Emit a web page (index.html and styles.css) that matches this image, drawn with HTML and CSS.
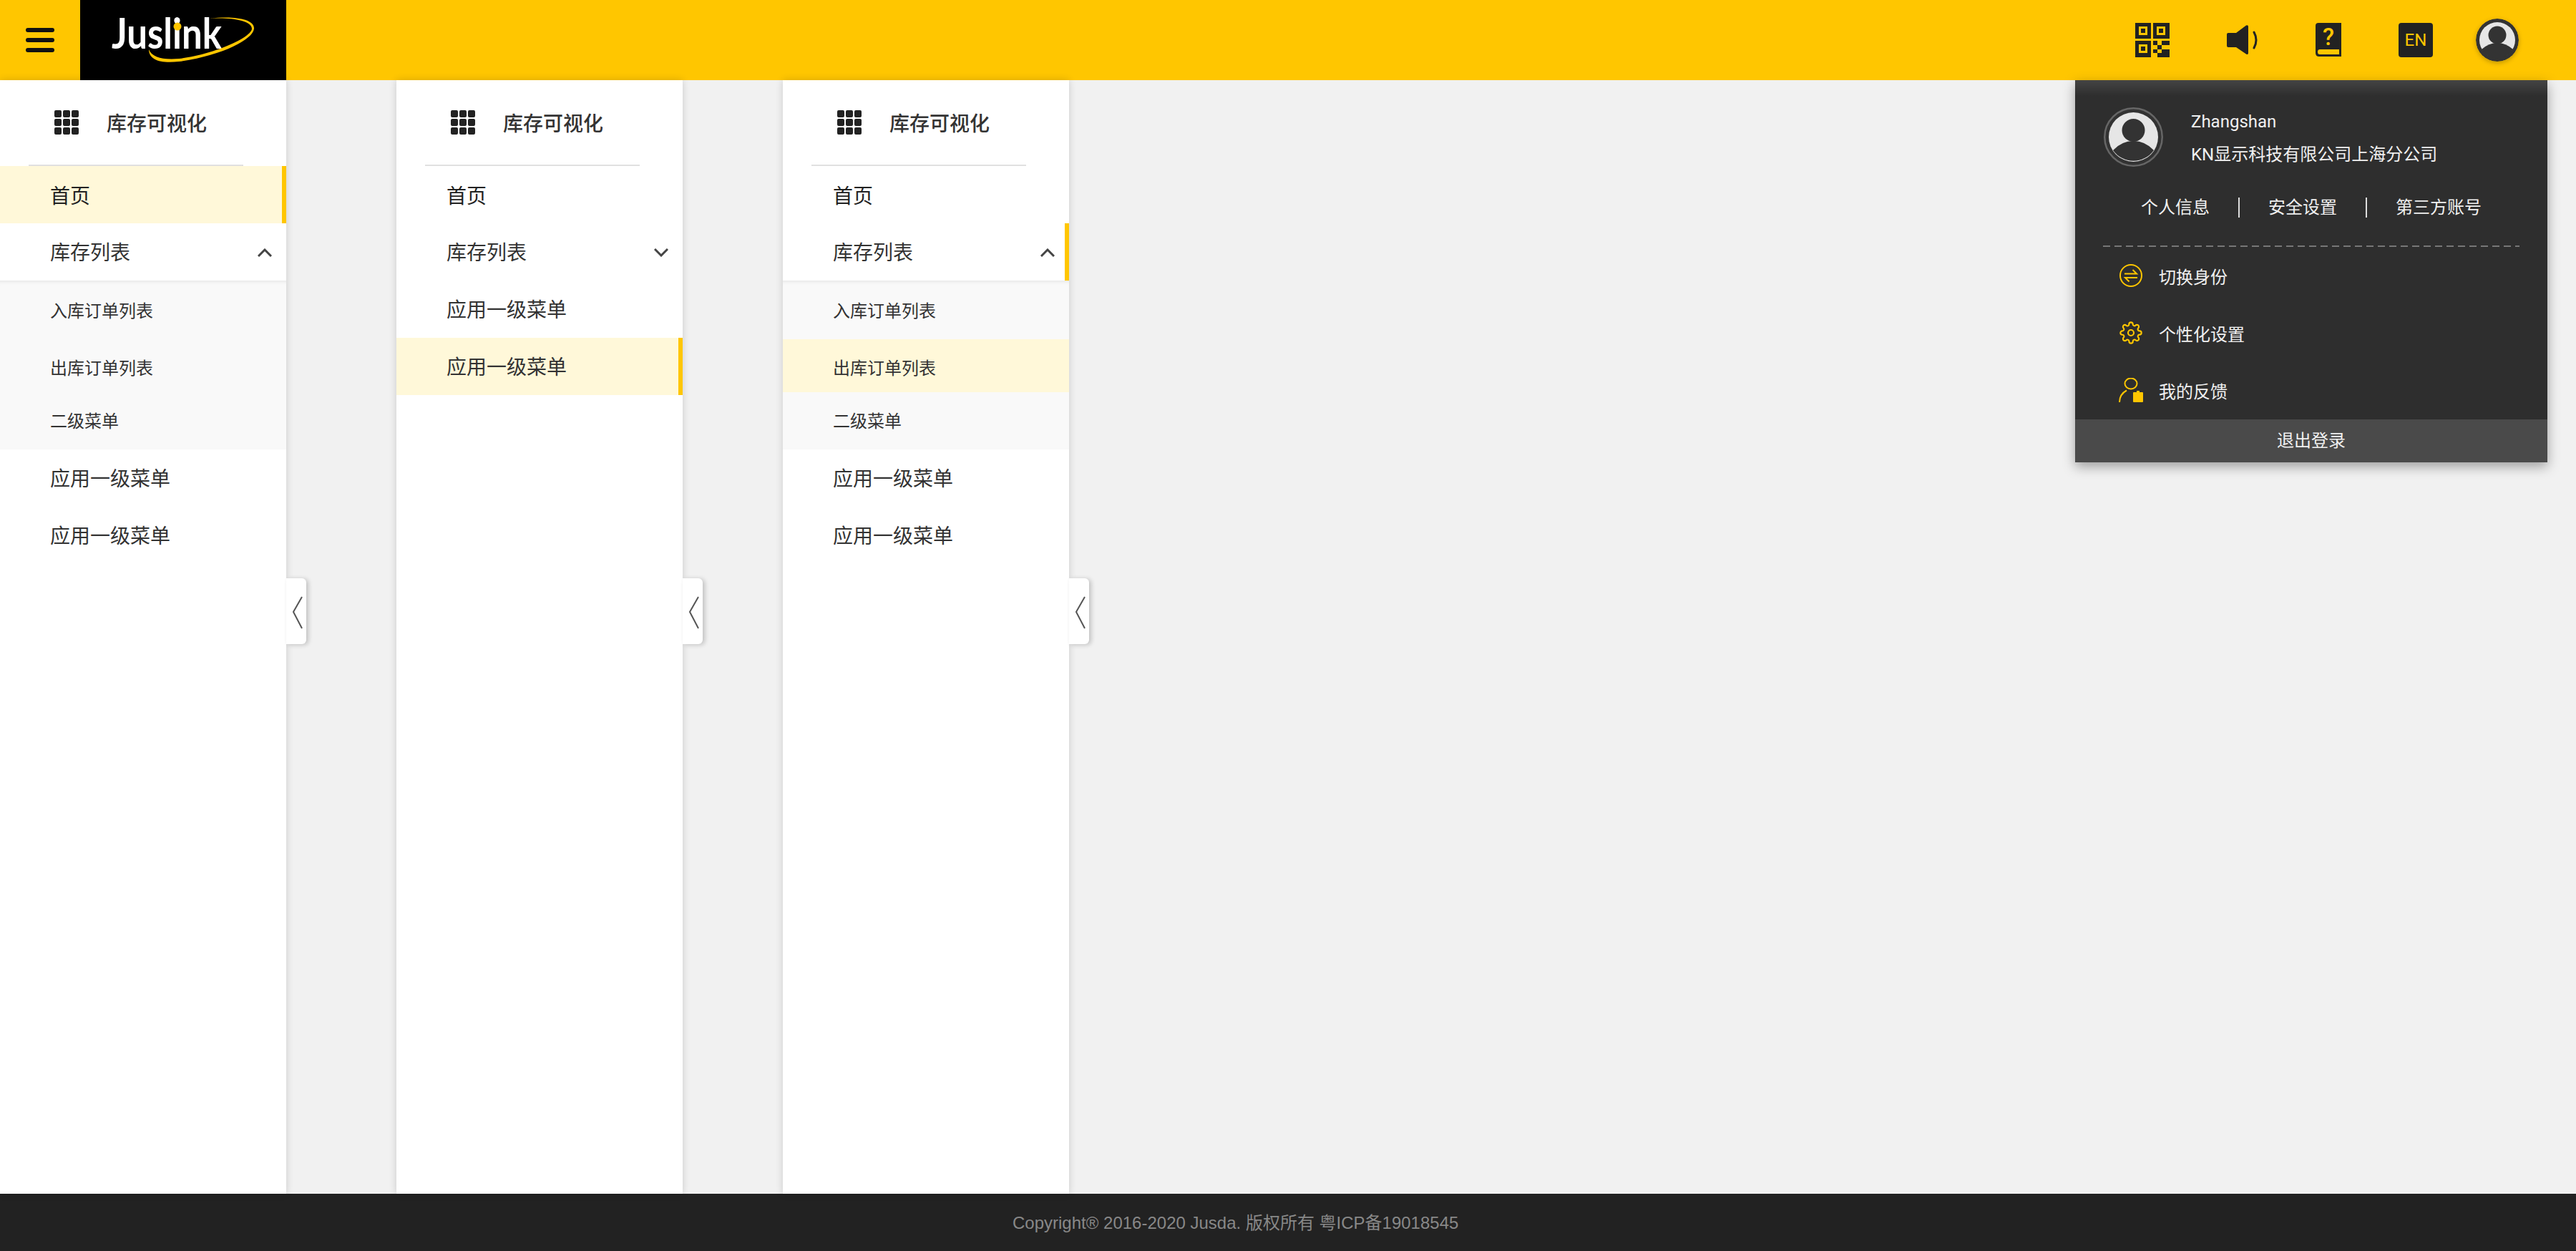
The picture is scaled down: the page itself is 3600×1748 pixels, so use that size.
FILE: index.html
```html
<!DOCTYPE html>
<html lang="en">
<head>
    <meta charset="UTF-8">
    <title>库存可视化</title>
    <link rel="stylesheet" href="styles.css">
</head>
<body>
    <div class="header">
        <div class="menu-btn"><i></i><i></i><i></i></div>
        <div class="logo">
            <svg width="288" height="112" viewBox="0 0 288 112">
                <text class="logo-text" x="44" y="68" textLength="154" lengthAdjust="spacingAndGlyphs">Juslink</text>
                <circle cx="136" cy="37" r="5.5" fill="#ffc600"/>
                <path fill="#ffc600" d="M181 26C213 22 244 26 243 40C242 55 198 78 138 86C113 89 96 84 96 69C100 80 116 84 138 82C188 76 240 52 240 40C240 28 208 24 181 26Z"/>
            </svg>
        </div>
        <div class="tools">
            <svg class="ico-qr" width="48" height="48" viewBox="0 0 48 48">
                <path fill="#222" d="M0 0h22v22H0zM25 0h23v22H25zM0 25h22v23H0z"/>
                <path fill="#ffc600" d="M5 5h12v12H5zM30 5h12v12H30zM5 30h12v12H5z"/>
                <path fill="#222" d="M8 8h6v6H8zM33 8h6v6h-6zM8 33h6v6H8z"/>
                <path fill="#222" d="M25 25h6v6h-6zM37 25h11v6H37zM31 31h6v6h-6zM25 37h6v5h-6zM37 37h5v11H37zM42 37h6v11h-6zM31 42h6v6h-6zM25 42h0z"/>
            </svg>
            <svg width="44" height="42" viewBox="0 0 44 42">
                <path fill="#222" d="M2 11H13L27 0.500Q30 -0.500 30 2V39Q30 42 27 40.500L13 31H2Q0 31 0 29V13Q0 11 2 11Z"/>
                <path fill="none" stroke="#222" stroke-width="3" stroke-linecap="round" d="M38 10Q44 21 38 32"/>
            </svg>
            <svg width="36" height="48" viewBox="0 0 36 48">
                <path fill="#222" d="M4 0H36V47H5Q0 47 0 42V4Q0 0 4 0Z"/>
                <path fill="#ffc600" d="M6 37H33V44H6Q3 44 3 40.500Q3 37 6 37Z"/>
                <text class="book-mark" x="18" y="31" text-anchor="middle">?</text>
            </svg>
            <div class="lang">EN</div>
            <svg class="ico-user" width="60" height="60" viewBox="0 0 60 60">
                <circle cx="30" cy="30" r="30" fill="#333"/>
                <circle cx="30" cy="30" r="25" fill="#e6e6e6"/>
                <ellipse cx="30" cy="23" rx="12.500" ry="12.500" fill="#333"/>
                <path fill="#333" d="M8 43Q18 34 30 34T52 43A25.500 25.500 0 0 1 8 43Z"/>
            </svg>
        </div>
    </div>

    <div class="main">
        <div class="side">
            <div class="side-title">
                <svg width="34" height="34" viewBox="0 0 34 34"><path fill="#222" d="M2 0h6a2 2 0 0 1 2 2v6a2 2 0 0 1-2 2H2a2 2 0 0 1-2-2V2a2 2 0 0 1 2-2zM14 0h6a2 2 0 0 1 2 2v6a2 2 0 0 1-2 2h-6a2 2 0 0 1-2-2V2a2 2 0 0 1 2-2zM26 0h6a2 2 0 0 1 2 2v6a2 2 0 0 1-2 2h-6a2 2 0 0 1-2-2V2a2 2 0 0 1 2-2zM2 12h6a2 2 0 0 1 2 2v6a2 2 0 0 1-2 2H2a2 2 0 0 1-2-2v-6a2 2 0 0 1 2-2zM14 12h6a2 2 0 0 1 2 2v6a2 2 0 0 1-2 2h-6a2 2 0 0 1-2-2v-6a2 2 0 0 1 2-2zM26 12h6a2 2 0 0 1 2 2v6a2 2 0 0 1-2 2h-6a2 2 0 0 1-2-2v-6a2 2 0 0 1 2-2zM2 24h6a2 2 0 0 1 2 2v6a2 2 0 0 1-2 2H2a2 2 0 0 1-2-2v-6a2 2 0 0 1 2-2zM14 24h6a2 2 0 0 1 2 2v6a2 2 0 0 1-2 2h-6a2 2 0 0 1-2-2v-6a2 2 0 0 1 2-2zM26 24h6a2 2 0 0 1 2 2v6a2 2 0 0 1-2 2h-6a2 2 0 0 1-2-2v-6a2 2 0 0 1 2-2z"/></svg>
                <span>库存可视化</span>
            </div>
            <ul class="nav">
                <li class="active dark">首页</li>
                <li>库存列表<svg class="arrow" width="20" height="12" viewBox="0 0 20 12"><path d="M1 11L10 2L19 11"/></svg></li>
            </ul>
            <ul class="sub">
                <li>入库订单列表</li>
                <li>出库订单列表</li>
                <li>二级菜单</li>
            </ul>
            <ul class="nav">
                <li>应用一级菜单</li>
                <li>应用一级菜单</li>
            </ul>
            <div class="fold"><svg width="14" height="46" viewBox="0 0 14 46"><path d="M13 1L1 22L13 45"/></svg></div>
        </div>

        <div class="side">
            <div class="side-title">
                <svg width="34" height="34" viewBox="0 0 34 34"><path fill="#222" d="M2 0h6a2 2 0 0 1 2 2v6a2 2 0 0 1-2 2H2a2 2 0 0 1-2-2V2a2 2 0 0 1 2-2zM14 0h6a2 2 0 0 1 2 2v6a2 2 0 0 1-2 2h-6a2 2 0 0 1-2-2V2a2 2 0 0 1 2-2zM26 0h6a2 2 0 0 1 2 2v6a2 2 0 0 1-2 2h-6a2 2 0 0 1-2-2V2a2 2 0 0 1 2-2zM2 12h6a2 2 0 0 1 2 2v6a2 2 0 0 1-2 2H2a2 2 0 0 1-2-2v-6a2 2 0 0 1 2-2zM14 12h6a2 2 0 0 1 2 2v6a2 2 0 0 1-2 2h-6a2 2 0 0 1-2-2v-6a2 2 0 0 1 2-2zM26 12h6a2 2 0 0 1 2 2v6a2 2 0 0 1-2 2h-6a2 2 0 0 1-2-2v-6a2 2 0 0 1 2-2zM2 24h6a2 2 0 0 1 2 2v6a2 2 0 0 1-2 2H2a2 2 0 0 1-2-2v-6a2 2 0 0 1 2-2zM14 24h6a2 2 0 0 1 2 2v6a2 2 0 0 1-2 2h-6a2 2 0 0 1-2-2v-6a2 2 0 0 1 2-2zM26 24h6a2 2 0 0 1 2 2v6a2 2 0 0 1-2 2h-6a2 2 0 0 1-2-2v-6a2 2 0 0 1 2-2z"/></svg>
                <span>库存可视化</span>
            </div>
            <ul class="nav">
                <li class="dark">首页</li>
                <li>库存列表<svg class="arrow" width="20" height="12" viewBox="0 0 20 12"><path d="M1 1L10 10L19 1"/></svg></li>
                <li>应用一级菜单</li>
                <li class="active">应用一级菜单</li>
            </ul>
            <div class="fold"><svg width="14" height="46" viewBox="0 0 14 46"><path d="M13 1L1 22L13 45"/></svg></div>
        </div>

        <div class="side">
            <div class="side-title">
                <svg width="34" height="34" viewBox="0 0 34 34"><path fill="#222" d="M2 0h6a2 2 0 0 1 2 2v6a2 2 0 0 1-2 2H2a2 2 0 0 1-2-2V2a2 2 0 0 1 2-2zM14 0h6a2 2 0 0 1 2 2v6a2 2 0 0 1-2 2h-6a2 2 0 0 1-2-2V2a2 2 0 0 1 2-2zM26 0h6a2 2 0 0 1 2 2v6a2 2 0 0 1-2 2h-6a2 2 0 0 1-2-2V2a2 2 0 0 1 2-2zM2 12h6a2 2 0 0 1 2 2v6a2 2 0 0 1-2 2H2a2 2 0 0 1-2-2v-6a2 2 0 0 1 2-2zM14 12h6a2 2 0 0 1 2 2v6a2 2 0 0 1-2 2h-6a2 2 0 0 1-2-2v-6a2 2 0 0 1 2-2zM26 12h6a2 2 0 0 1 2 2v6a2 2 0 0 1-2 2h-6a2 2 0 0 1-2-2v-6a2 2 0 0 1 2-2zM2 24h6a2 2 0 0 1 2 2v6a2 2 0 0 1-2 2H2a2 2 0 0 1-2-2v-6a2 2 0 0 1 2-2zM14 24h6a2 2 0 0 1 2 2v6a2 2 0 0 1-2 2h-6a2 2 0 0 1-2-2v-6a2 2 0 0 1 2-2zM26 24h6a2 2 0 0 1 2 2v6a2 2 0 0 1-2 2h-6a2 2 0 0 1-2-2v-6a2 2 0 0 1 2-2z"/></svg>
                <span>库存可视化</span>
            </div>
            <ul class="nav">
                <li class="dark">首页</li>
                <li class="marked">库存列表<svg class="arrow" width="20" height="12" viewBox="0 0 20 12"><path d="M1 11L10 2L19 11"/></svg></li>
            </ul>
            <ul class="sub">
                <li>入库订单列表</li>
                <li class="on">出库订单列表</li>
                <li>二级菜单</li>
            </ul>
            <ul class="nav">
                <li>应用一级菜单</li>
                <li>应用一级菜单</li>
            </ul>
            <div class="fold"><svg width="14" height="46" viewBox="0 0 14 46"><path d="M13 1L1 22L13 45"/></svg></div>
        </div>

        <div class="panel">
            <div class="user">
                <svg width="83" height="83" viewBox="0 0 83 83">
                    <circle cx="41.500" cy="41.500" r="40.250" fill="#333" stroke="#666" stroke-width="2.500"/>
                    <circle cx="41.500" cy="41.500" r="34.500" fill="#e6e6e6"/>
                    <ellipse cx="41.500" cy="32" rx="16" ry="16" fill="#333"/>
                    <path fill="#333" d="M13 60Q25 47 41.500 47T70 60A35 35 0 0 1 13 60Z"/>
                </svg>
                <div class="user-info">
                    <p>Zhangshan</p>
                    <p>KN显示科技有限公司上海分公司</p>
                </div>
            </div>
            <div class="links">
                <span>个人信息</span><i></i><span>安全设置</span><i></i><span>第三方账号</span>
            </div>
            <div class="dash"></div>
            <ul class="panel-menu">
                <li>
                    <span class="panel-ico">
                        <svg width="32" height="32" viewBox="0 0 32 32" fill="none" stroke="#ffc600" stroke-width="2">
                            <circle cx="16" cy="16" r="15"/>
                            <path d="M7 13.500H24L18.500 8M25 19H8L13.500 24.500"/>
                        </svg>
                    </span>
                    切换身份
                </li>
                <li>
                    <span class="panel-ico">
                        <svg width="32" height="32" viewBox="0 0 24 24" fill="none" stroke="#ffc600" stroke-width="1.600">
                            <circle cx="12" cy="12" r="3"/>
                            <path d="M19.400 15a1.650 1.650 0 0 0 .33 1.820l.06.06a2 2 0 0 1 0 2.830 2 2 0 0 1-2.830 0l-.06-.06a1.650 1.650 0 0 0-1.820-.33 1.650 1.650 0 0 0-1 1.510V21a2 2 0 0 1-2 2 2 2 0 0 1-2-2v-.09A1.650 1.650 0 0 0 9 19.400a1.650 1.650 0 0 0-1.820.33l-.06.06a2 2 0 0 1-2.830 0 2 2 0 0 1 0-2.830l.06-.06a1.650 1.650 0 0 0 .33-1.820 1.650 1.650 0 0 0-1.510-1H3a2 2 0 0 1-2-2 2 2 0 0 1 2-2h.09A1.650 1.650 0 0 0 4.600 9a1.650 1.650 0 0 0-.33-1.820l-.06-.06a2 2 0 0 1 0-2.830 2 2 0 0 1 2.830 0l.06.06a1.650 1.650 0 0 0 1.820.33H9a1.650 1.650 0 0 0 1-1.510V3a2 2 0 0 1 2-2 2 2 0 0 1 2 2v.09a1.650 1.650 0 0 0 1 1.510 1.650 1.650 0 0 0 1.820-.33l.06-.06a2 2 0 0 1 2.830 0 2 2 0 0 1 0 2.830l-.06.06a1.650 1.650 0 0 0-.33 1.820V9a1.650 1.650 0 0 0 1.510 1H21a2 2 0 0 1 2 2 2 2 0 0 1-2 2h-.09a1.650 1.650 0 0 0-1.510 1z"/>
                        </svg>
                    </span>
                    个性化设置
                </li>
                <li>
                    <span class="panel-ico">
                        <svg width="34" height="34" viewBox="0 0 34 34">
                            <ellipse cx="17" cy="8" rx="8.500" ry="7.500" fill="none" stroke="#ffc600" stroke-width="2"/>
                            <path d="M1 34Q1 23 11 17.500" fill="none" stroke="#ffc600" stroke-width="2"/>
                            <path fill="#ffc600" d="M21 20H25V18H29V20H33Q34 20 34 21V33Q34 34 33 34H21Q20 34 20 33V21Q20 20 21 20Z"/>
                        </svg>
                    </span>
                    我的反馈
                </li>
            </ul>
            <div class="logout">退出登录</div>
        </div>
    </div>

    <div class="footer">Copyright® 2016-2020 Jusda. 版权所有 粤ICP备19018545</div>
</body>
</html>
```

FILE: styles.css
```css
*{
    padding: 0;
    margin: 0;
    box-sizing: border-box;
}
li{
    list-style: none;
}
html,body{
    height: 100%;
}
body{
    display: flex;
    flex-direction: column;
    background-color: #f1f1f1;
    font-family: Roboto, "Noto Sans CJK SC", sans-serif;
    color: #333;
    overflow: hidden;
}

/* header */
.header{
    flex: none;
    display: flex;
    align-items: center;
    height: 112px;
    background-color: #ffc600;
}
.menu-btn{
    width: 112px;
    display: flex;
    flex-direction: column;
    align-items: center;
    gap: 8px;
}
.menu-btn i{
    display: block;
    width: 40px;
    height: 6px;
    border-radius: 3px;
    background-color: #111;
}
.logo{
    width: 288px;
    height: 112px;
    background-color: #000;
}
.logo svg{
    display: block;
}
.logo-text{
    font-family: Lato, sans-serif;
    font-size: 60px;
    font-weight: 700;
    fill: #fff;
}
.tools{
    margin-left: auto;
    padding-right: 80px;
    display: flex;
    align-items: center;
    gap: 80px;
}
.tools svg{
    display: block;
}
.book-mark{
    font-family: Roboto, sans-serif;
    font-size: 33px;
    font-weight: 500;
    fill: #ffc600;
}
.lang{
    width: 48px;
    height: 48px;
    border-radius: 4px;
    background-color: #222;
    color: #ffc600;
    font-size: 24px;
    line-height: 48px;
    text-align: center;
}
.ico-user{
    margin-left: -20px;
    border-radius: 50%;
    box-shadow: 0 2px 6px rgba(0,0,0,.25);
}

/* sidebars */
.main{
    flex: 1;
    position: relative;
    display: flex;
    gap: 140px;
}
.side{
    position: relative;
    width: 400px;
    background-color: #fff;
    box-shadow: 0 0 10px rgba(0,0,0,.16);
}
.side:first-child{
    margin-right: 14px;
}
.side-title{
    height: 120px;
    margin: 0 60px 0 40px;
    padding-left: 36px;
    display: flex;
    align-items: center;
    gap: 39px;
    border-bottom: 2px solid #e0e0e0;
    font-size: 28px;
    font-weight: 500;
    color: #333;
}
.nav li{
    position: relative;
    height: 80px;
    padding-left: 70px;
    font-size: 28px;
    line-height: 83px;
}
.nav li.dark{
    color: #222;
    line-height: 86px;
}
.nav li.active{
    background-color: #fff8d9;
    border-right: 6px solid #ffc600;
}
.nav li.marked{
    border-right: 6px solid #ffc600;
}
.arrow{
    position: absolute;
    left: 360px;
    top: 35px;
    fill: none;
    stroke: #444;
    stroke-width: 3;
}
.sub{
    height: 236px;
    background-color: #f9f9f9;
    box-shadow: inset 0 6px 6px -6px rgba(0,0,0,.12);
}
.sub li{
    padding-left: 70px;
    font-size: 24px;
    height: 80px;
    line-height: 86px;
}
.sub li:first-child{
    height: 82px;
}
.sub li:nth-child(2){
    height: 74px;
    line-height: 82px;
}
.sub li:nth-child(3){
    line-height: 82px;
}
.sub li.on{
    background-color: #fff8d9;
}
.fold{
    position: absolute;
    left: 400px;
    top: 696px;
    width: 28px;
    height: 92px;
    padding: 25px 0 0 9px;
    background-color: #fff;
    border-radius: 0 6px 6px 0;
    box-shadow: 3px 1px 6px rgba(0,0,0,.2);
}
.fold svg{
    display: block;
    fill: none;
    stroke: #555;
    stroke-width: 2;
}

/* user panel */
.panel{
    position: absolute;
    right: 40px;
    top: 0;
    width: 660px;
    height: 534px;
    background: linear-gradient(#444, #2e2e2e 22px);
    color: #f0f0f0;
    font-size: 24px;
    box-shadow: 0 6px 16px rgba(0,0,0,.35);
}
.user{
    height: 121px;
    display: flex;
    align-items: flex-start;
    gap: 39px;
    padding: 38px 0 0 40px;
}
.user svg{
    display: block;
    flex: none;
}
.user-info{
    margin-top: -3px;
}
.user-info p{
    line-height: 46px;
}
.links{
    margin-top: 43px;
    display: flex;
    justify-content: center;
    align-items: center;
    gap: 40px;
    height: 28px;
    line-height: 28px;
}
.links i{
    width: 2px;
    height: 28px;
    background-color: #ddd;
}
.dash{
    margin: 39px 39px 0 39px;
    height: 2px;
    background: repeating-linear-gradient(90deg, #777 0, #777 10px, transparent 10px, transparent 16px);
}
.panel-menu li{
    height: 80px;
    display: flex;
    align-items: center;
    padding-left: 60px;
    gap: 21px;
}
.panel-ico{
    width: 36px;
    display: flex;
    justify-content: center;
}
.logout{
    position: absolute;
    left: 0;
    right: 0;
    bottom: 0;
    height: 60px;
    background-color: #4a4a4a;
    line-height: 60px;
    text-align: center;
}

/* footer */
.footer{
    flex: none;
    height: 80px;
    padding-left: 1415px;
    background-color: #222;
    color: #888;
    font-family: "Liberation Sans", "Noto Sans CJK SC", sans-serif;
    font-size: 24px;
    line-height: 82px;
}
```
